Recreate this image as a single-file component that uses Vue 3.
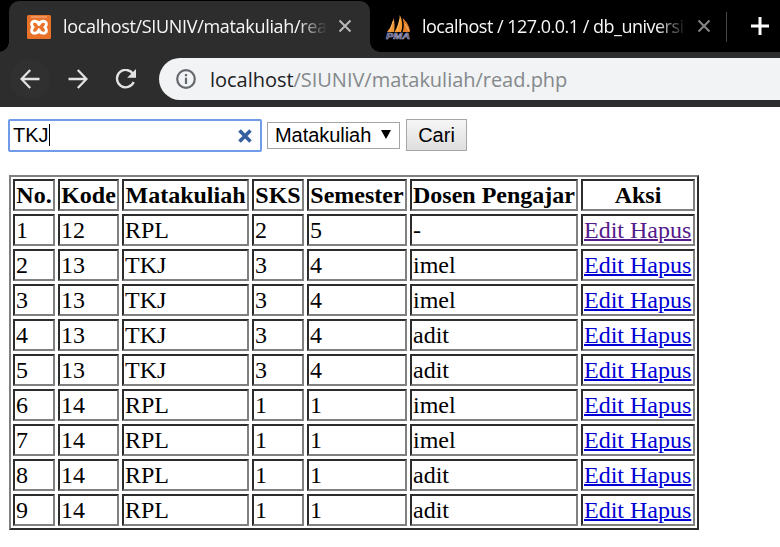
<script setup>
import { ref } from 'vue'

const keyword = ref('TKJ')
const headers = ['No.', 'Kode', 'Matakuliah', 'SKS', 'Semester', 'Dosen Pengajar', 'Aksi']
const rows = [
  [1, 12, 'RPL', 2, 5, '-'],
  [2, 13, 'TKJ', 3, 4, 'imel'],
  [3, 13, 'TKJ', 3, 4, 'imel'],
  [4, 13, 'TKJ', 3, 4, 'adit'],
  [5, 13, 'TKJ', 3, 4, 'adit'],
  [6, 14, 'RPL', 1, 1, 'imel'],
  [7, 14, 'RPL', 1, 1, 'imel'],
  [8, 14, 'RPL', 1, 1, 'adit'],
  [9, 14, 'RPL', 1, 1, 'adit'],
]
</script>

<template>
  <div class="window">
    <header class="chrome">
      <div class="tabs">
        <div class="tab active">
          <svg class="favicon" viewBox="0 0 24 24">
            <rect width="24" height="24" rx="1.5" fill="#e9722b" />
            <path d="M4 2H20" stroke="#f5b68e" stroke-width="1" />
            <path
              d="M12 9.600C11 5.400 4.600 5 4.600 9C4.600 10.600 5.200 11.400 6.200 12.200C5.200 13 4.600 13.800 4.600 15.400C4.600 19.400 11 19 12 14.800C13 19 19.400 19.400 19.400 15.400C19.400 13.800 18.800 13 17.800 12.200C18.800 11.400 19.400 10.600 19.400 9C19.400 5 13 5.400 12 9.600Z"
              fill="#e9722b" stroke="#fff" stroke-width="2.900" stroke-linejoin="round"
            />
            <path d="M9.500 12.200H14.500" stroke="#e9722b" stroke-width="1.400" />
          </svg>
          <span class="title">localhost/SIUNIV/matakuliah/rea</span>
          <svg class="close" viewBox="0 0 14 14"><path d="M1.5 1.5L12.5 12.5M12.5 1.5L1.5 12.5" /></svg>
        </div>
        <div class="tab other">
          <svg class="favicon pma" viewBox="0 0 26 26">
            <path d="M2 18C6 13 8 9 8.500 4C9.800 8 9.800 14 9 18Z" fill="#ef9435" />
            <path d="M9.500 18C13 12 14.500 7 14.800 1C17.500 6 18 13 16 18Z" fill="#f79b32" />
            <path d="M17.500 18C19.500 13 19 9 17.500 4C22 8 25 13 25 18Z" fill="#e47d27" />
            <path d="M8 7L5 17M15 5L12 17M20 10L24 17" stroke="#ffc576" stroke-width=".8" />
            <text x="1" y="24.500" textLength="24" lengthAdjust="spacingAndGlyphs">PMA</text>
          </svg>
          <span class="title">localhost / 127.0.0.1 / db_universi</span>
          <svg class="close" viewBox="0 0 14 14"><path d="M1.500 1.500L12.500 12.500M12.500 1.500L1.500 12.500" /></svg>
        </div>
        <i class="divider"></i>
        <svg class="plus" viewBox="0 0 18 18"><path d="M9 0V18M0 9H18" /></svg>
      </div>
      <div class="toolbar">
        <span class="nav-button back">
          <svg viewBox="0 0 20 20"><path d="M19.500 10H2M10.200 1L1.500 10L10.200 19" /></svg>
        </span>
        <span class="nav-button">
          <svg viewBox="0 0 20 20"><path d="M.5 10H18M9.800 1L18.500 10L9.800 19" /></svg>
        </span>
        <span class="nav-button reload">
          <svg viewBox="0 0 22 20"><path d="M18.200 5.200A8.700 8.700 0 1 0 18.700 13" /><path class="solid" d="M21 0V8.800H12.200Z" /></svg>
        </span>
        <div class="address">
          <svg class="info" viewBox="0 0 20 20">
            <circle cx="10" cy="10" r="8.800" />
            <path d="M10 8.800V15M10 5V7.200" />
          </svg>
          <span class="url"><b>localhost</b>/SIUNIV/matakuliah/read.php</span>
        </div>
      </div>
    </header>

    <main>
      <form class="search" @submit.prevent>
        <div class="field">
          <span class="value">{{ keyword }}</span><i class="caret"></i>
          <svg class="clear" viewBox="0 0 14 14"><path d="M1.500 1.500L12.500 12.500M12.500 1.500L1.500 12.500" /></svg>
        </div>
        <div class="select">
          <span>Matakuliah</span>
          <svg viewBox="0 0 10 9"><path d="M0 0H10L5 9Z" /></svg>
        </div>
        <button type="submit">Cari</button>
      </form>

      <table>
        <thead>
          <tr><th v-for="h in headers" :key="h">{{ h }}</th></tr>
        </thead>
        <tbody>
          <tr v-for="row in rows" :key="row[0]">
            <td v-for="(cell, i) in row" :key="i">{{ cell }}</td>
            <td><a href="#" :class="{ visited: row[0] === 1 }">Edit Hapus</a></td>
          </tr>
        </tbody>
      </table>
    </main>
  </div>
</template>

<style>
body { background: #fff; overflow: hidden; }
</style>

<style scoped>
* { box-sizing: border-box; }
svg { display: block; flex: none; }
.window { width: 780px; height: 547px; overflow: hidden; background: #fff; }
.chrome { height: 107px; background: #2d2d2d; font-family: "Open Sans", "Noto Sans", sans-serif; }
.tabs { display: flex; height: 52px; padding: 1px 0 0 9px; background: #000; }
.tab { display: flex; align-items: center; height: 51px; flex: none; }
.active { position: relative; width: 361px; padding-left: 18px; background: #2d2d2d; border-radius: 10px 10px 0 0; }
.active::before, .active::after { content: ""; position: absolute; bottom: 0; width: 10px; height: 10px; }
.active::before { left: -10px; background: radial-gradient(circle at 0 0, #000 9.500px, #2d2d2d 10px); }
.active::after { right: -10px; background: radial-gradient(circle at 100% 0, #000 9.500px, #2d2d2d 10px); }
.other { width: 356px; padding-left: 15px; }
.favicon { width: 24px; height: 24px; }
.pma { width: 26px; height: 26px; }
.pma text { font: italic bold 9px "Liberation Sans", sans-serif; fill: #36346b; stroke: #b7b6d2; stroke-width: .5px; }
.title {
  width: 264px; margin: -2px 0 0 12px; white-space: nowrap; color: #f7f7f7;
  font-size: 18px; line-height: 26px; letter-spacing: -.32px;
  -webkit-mask-image: linear-gradient(90deg, #000 235px, transparent 264px);
  mask-image: linear-gradient(90deg, #000 235px, transparent 264px);
}
.other .title { margin-left: 11px; width: 264px; letter-spacing: -.51px; }
.close { width: 14px; height: 14px; margin: -1px 0 0 11px; fill: none; stroke: #b9b9b9; stroke-width: 2; }
.other .close { stroke: #858585; }
.divider { width: 1px; height: 30px; margin-top: 11px; background: #454545; }
.plus { width: 18px; height: 18px; margin: 16px 0 0 24px; stroke: #fff; stroke-width: 3; }
.toolbar { display: flex; align-items: center; height: 54px; padding-left: 10px; }
.nav-button { display: grid; place-items: center; width: 40px; height: 40px; margin-right: 8px; border-radius: 50%; flex: none; }
.back { background: #303030; }
.nav-button svg { width: 20px; height: 20px; fill: none; stroke: #e2e2e2; stroke-width: 2.300; }
.reload svg { width: 22px; }
.nav-button .solid { fill: #e2e2e2; stroke: none; }
.address { display: flex; align-items: center; flex: 1; height: 42px; margin-left: 5px; padding-left: 17px; background: #f1f3f4; border-radius: 21px 0 0 21px; }
.info { width: 20px; height: 20px; fill: none; stroke: #65696d; stroke-width: 2.200; }
.url { margin-left: 14px; font-size: 20px; letter-spacing: -.03px; color: #85898c; white-space: nowrap; }
.url b { font-weight: 400; color: #202124; }
main { padding: 11px 0 0 8px; }
.search { display: flex; align-items: center; height: 34px; font: 20px "Liberation Sans", Arial, sans-serif; color: #000; }
.field { display: flex; align-items: center; width: 254px; height: 33px; padding: 0 8px 0 3px; border: 2px solid #6f9be8; border-radius: 2px; }
.caret { width: 1px; height: 22px; background: #000; }
.clear { width: 14px; height: 14px; margin: 2px 0 0 auto; stroke: #365f9f; stroke-width: 3.600; }
.select { display: flex; align-items: center; width: 133px; height: 27px; margin-left: 5px; padding-left: 7px; border: 1px solid #a5a5a5; letter-spacing: -.05px; }
.select svg { width: 10px; height: 9px; margin: 0 0 1px 10px; }
button { width: 61px; height: 32px; margin-left: 6px; padding: 0; border: 1px solid #a6a6a6; background: linear-gradient(#f6f6f6, #dedede); font: inherit; color: #000; }
table {
  display: grid; grid-template-columns: 42px 61px 127px 52px 100px 168px 114px; grid-auto-rows: 32px; gap: 3px;
  width: 690px; margin: 23px 0 0 1px; padding: 2px; border: 2px solid; border-color: #808080 #2c2c2c #2c2c2c #808080;
  font: 24px/28px "Liberation Serif", "Times New Roman", serif; color: #000;
}
thead, tbody, tr { display: contents; }
th, td { padding: 0 1px; border: 2px solid; border-color: #2c2c2c #808080 #808080 #2c2c2c; white-space: nowrap; text-align: left; }
th { text-align: center; }
a { color: #0000d5; text-decoration-thickness: 2px; }
.visited { color: #551a8b; }
</style>
